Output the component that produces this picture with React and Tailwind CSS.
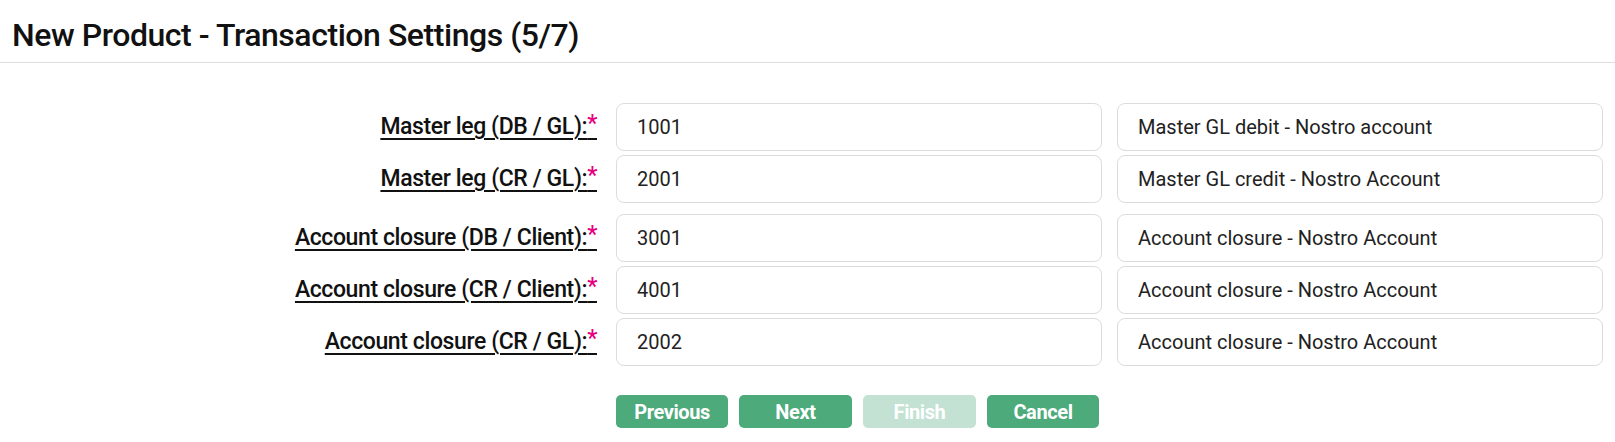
import React from "react";

const rows = [
  { label: "Master leg (DB / GL):", code: "1001", desc: "Master GL debit - Nostro account" },
  { label: "Master leg (CR / GL):", code: "2001", desc: "Master GL credit - Nostro Account" },
  { label: "Account closure (DB / Client):", code: "3001", desc: "Account closure - Nostro Account", gap: true },
  { label: "Account closure (CR / Client):", code: "4001", desc: "Account closure - Nostro Account" },
  { label: "Account closure (CR / GL):", code: "2002", desc: "Account closure - Nostro Account" },
];

function Field({ value }) {
  return (
    <div className="h-[48px] rounded-[8px] border border-[#dcdcdc] bg-white px-5 flex items-center text-[20px] text-[#222]">
      {value}
    </div>
  );
}

export default function App() {
  return (
    <div className="w-[1615px] h-[442px] bg-white text-[#111]" style={{ fontFamily: "Roboto, 'Noto Sans', sans-serif" }}>
      <div className="h-[63px] border-b border-[#dedede] px-3 flex items-center">
        <h1 className="text-[32px] font-medium tracking-[-0.45px] pt-[7px]">New Product - Transaction Settings (5/7)</h1>
      </div>

      <div className="px-3 pt-[40px]">
        <div className="grid grid-cols-[1fr_486px_486px] gap-x-[15px]">
          {rows.map((r, i) => {
            const mt = i === 0 ? "" : r.gap ? "mt-[11px]" : "mt-[4px]";
            return (
              <React.Fragment key={r.label}>
                <div className={`flex items-center justify-end pr-[4px] ${mt}`}>
                  <span className="text-[23px] font-medium tracking-[-0.4px] underline underline-offset-[4px] decoration-[1.5px]">
                    {r.label}
                    <span className="text-[#e6007e] relative -top-[3px]">*</span>
                  </span>
                </div>
                <div className={mt}>
                  <Field value={r.code} />
                </div>
                <div className={mt}>
                  <Field value={r.desc} />
                </div>
              </React.Fragment>
            );
          })}
          <div />
          <div className="col-span-2 mt-[29px] flex gap-[11px]">
            <button className="w-[112px] h-[33px] rounded-[5px] bg-[#4caa7b] text-white text-[20px] font-bold tracking-[-0.4px]">Previous</button>
            <button className="w-[113px] h-[33px] rounded-[5px] bg-[#4caa7b] text-white text-[20px] font-bold tracking-[-0.4px]">Next</button>
            <button className="w-[113px] h-[33px] rounded-[5px] bg-[#c3e2d3] text-white text-[20px] font-bold tracking-[-0.4px]">Finish</button>
            <button className="w-[112px] h-[33px] rounded-[5px] bg-[#4caa7b] text-white text-[20px] font-bold tracking-[-0.4px]">Cancel</button>
          </div>
        </div>
      </div>
    </div>
  );
}
